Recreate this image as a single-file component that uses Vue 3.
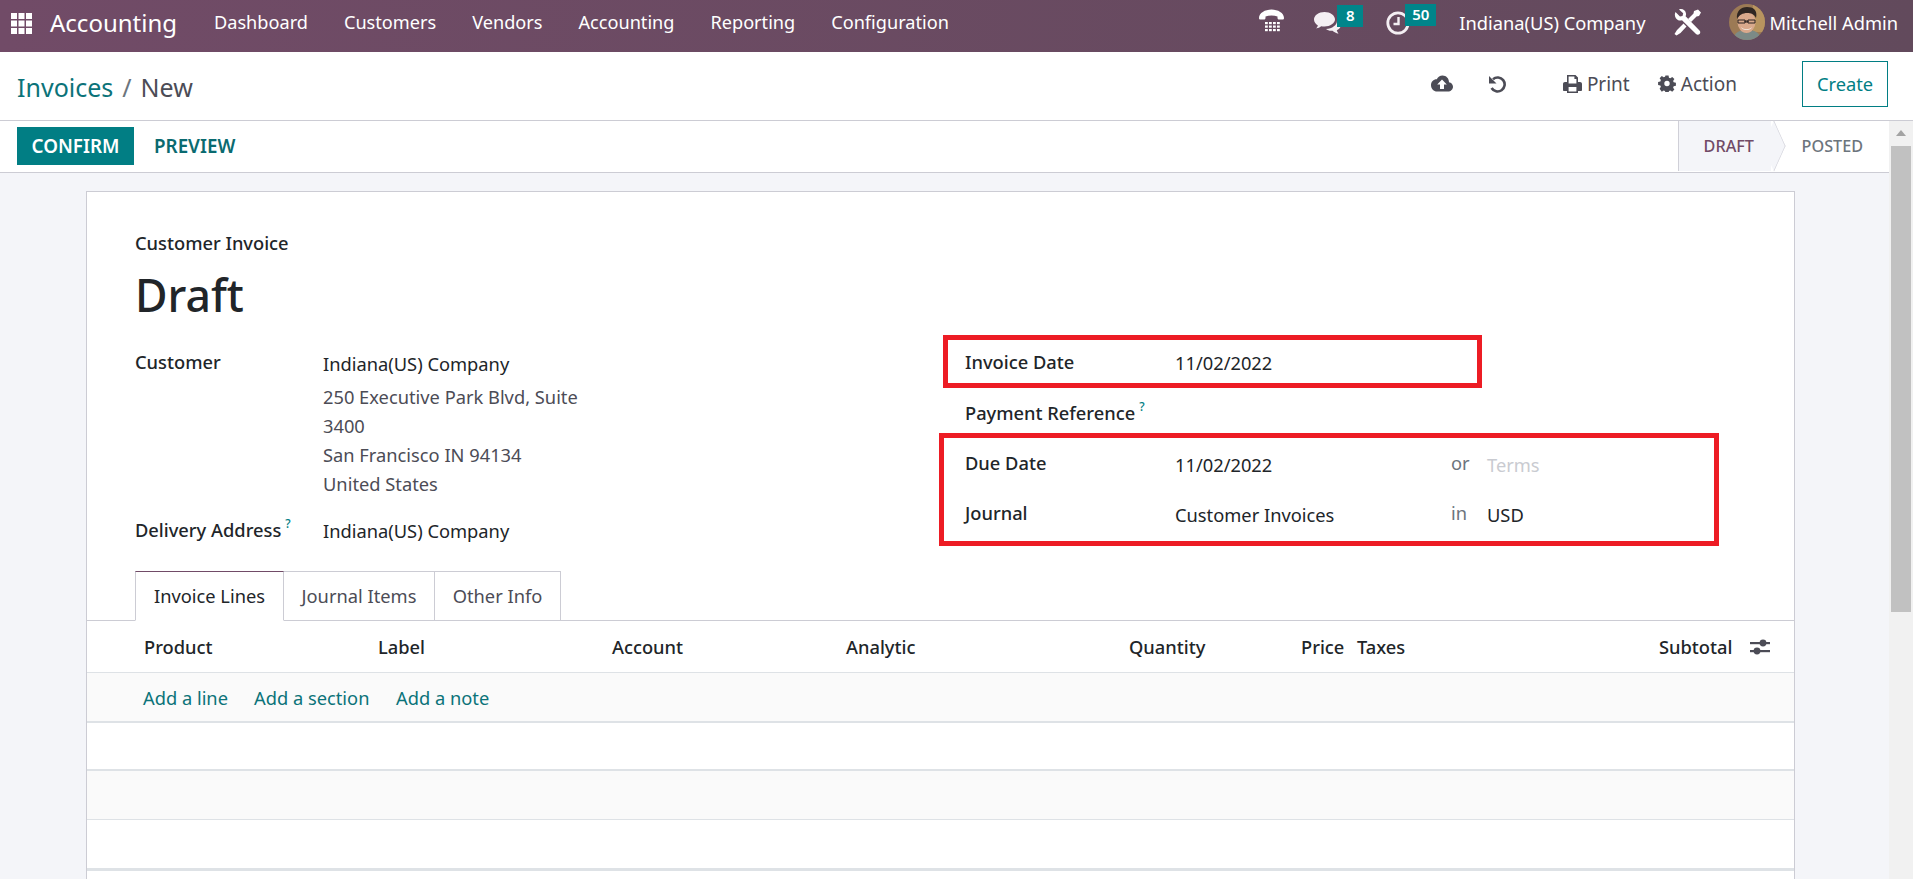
<template>
  <div class="app">
    <header class="navbar">
      <svg class="apps" viewBox="0 0 21 21" width="21" height="21" fill="#fff">
        <template v-for="y in [0, 7.5, 15]" :key="y">
          <rect v-for="x in [0, 7.5, 15]" :key="x" :x="x" :y="y" width="6" height="6" />
        </template>
      </svg>
      <span class="brand">Accounting</span>
      <nav class="menu">
        <a v-for="item in menu" :key="item">{{ item }}</a>
      </nav>
      <div class="systray">
        <svg class="tray-phone" viewBox="0 0 25 23" width="25" height="23" fill="#fff">
          <path d="M0 9c0-5 6-8.500 12.500-8.500S25 4 25 9c0 1-.6 1.500-1.500 1.500h-3.500c-1 0-1.500-.6-1.500-1.500V7.500c-3.500-1.200-8.500-1.200-12 0V9c0 .9-.5 1.500-1.500 1.500H1.500C.6 10.500 0 10 0 9z" />
          <template v-for="y in [13, 16.500, 20]" :key="y">
            <rect v-for="x in [6, 10, 14, 18]" :key="x" :x="x" :y="y" width="2.800" height="2.200" />
          </template>
        </svg>
        <span class="tray-item tray-chat">
          <svg viewBox="0 0 27 22" width="27" height="22" fill="#f4eff3">
            <path d="M10.500 0C4.700 0 0 3.400 0 7.600c0 2.400 1.500 4.500 3.900 5.900-.3 1-.9 2-1.700 2.900 1.900-.2 3.700-1 5-2.100 1.100.2 2.200.3 3.300.3 5.800 0 10.500-3.400 10.500-7C21 3.400 16.300 0 10.500 0z" />
            <path d="M23 8.500c.2 4.600-4.800 8.200-11 8.500 1.700 1.500 4 2 6.500 1.700 1.600 1.300 3.700 2.400 6 3-.8-1-1.400-2.200-1.700-3.500 2.500-1.100 4.200-3.100 4.200-5.300 0-1.900-1.500-3.500-4-4.400z" />
          </svg>
          <b class="badge">8</b>
        </span>
        <span class="tray-item tray-clock">
          <svg viewBox="0 0 24 24" width="24" height="24" fill="none" stroke="#f4eff3">
            <circle cx="12" cy="12" r="10.200" stroke-width="2.800" />
            <path d="M12.500 6v7H7.500" stroke-width="2.400" />
          </svg>
          <b class="badge">50</b>
        </span>
        <span class="company">Indiana(US) Company</span>
        <svg class="tools" viewBox="0 0 27 27" width="27" height="27" fill="#fff">
          <path d="M1.500 3 6 7.500l2.500-.6.700-2.600L5 .5C8-.7 11.500 1 12 4.500c.2 1-.1 2-.4 2.800L25.500 21.500c1 1 1 2.500 0 3.500s-2.500 1-3.500 0L8 11.300c-1 .3-2.200.4-3.200.1C1.500 10.500-.2 6.500 1.500 3z" />
          <path d="M24 .5 27 3.500l-2 3.500-2.500.5-5.500 5.500-3-3 5.500-5.500.5-2.500zM9.500 14.500l3 3-6 6.500-4 2.500-2-1.500 2.500-4z" />
        </svg>
        <svg class="avatar" viewBox="0 0 36 36" width="36" height="36">
          <defs>
            <clipPath id="avatar-clip"><circle cx="18" cy="18" r="18" /></clipPath>
          </defs>
          <g clip-path="url(#avatar-clip)">
            <rect width="36" height="36" fill="#9c7a55" />
            <rect x="24" width="12" height="28" fill="#b8945f" />
            <path d="M4 36c1-8 7-10 14-10s13 2 14 10z" fill="#7c8a86" />
            <ellipse cx="17.500" cy="18" rx="9" ry="11" fill="#d9a98c" />
            <path d="M8 15c-1-8 4-12 10-12s11 3 9 11c-2-4-5-5-9-5s-8 2-10 6z" fill="#2f2622" />
            <path d="M9 16h7v3H9zM19 16h7v3h-7zM16 17h3v1h-3z" fill="none" stroke="#2a2320" stroke-width="1" />
            <path d="M12 23c3 3 8 3 11 0-1 4-10 4-11 0z" fill="#f4efe9" />
          </g>
        </svg>
        <span class="username">Mitchell Admin</span>
      </div>
    </header>

    <div class="control-panel">
      <div class="breadcrumb">
        <a>Invoices</a><span class="slash">/</span><span class="current">New</span>
      </div>
      <div class="cp-actions">
        <svg class="icon-cloud" viewBox="0 0 22 17" width="22" height="17">
          <path fill="#4c4c56" d="M18 7.200C18 3.300 15 .5 11.600.5 9 .5 6.800 2 5.800 4.300 2.600 4.200 0 6.800 0 10.200 0 13.900 2.800 16.500 6 16.500h11c2.800 0 5-2.200 5-4.800 0-2.300-1.700-4.100-4-4.500z" />
          <path fill="#fff" d="M11 4.500 15.800 9.500H13v4.500H9V9.500H6.200z" />
        </svg>
        <svg class="icon-undo" viewBox="0 0 18 18" width="18" height="18" fill="none">
          <path d="M5 4.200A7 7 0 1 1 3.600 13" stroke="#4c4c56" stroke-width="2.600" />
          <path d="M1 1v7.500h7.500z" fill="#4c4c56" />
        </svg>
        <span class="cp-link cp-print">
          <svg viewBox="0 0 19 18" width="19" height="18">
            <path fill="#4c4c56" d="M4 0h8.500L15 2.500V7h2c1.200 0 2 .8 2 2v6c0 .5-.4 1-1 1h-3v2H4v-2H1c-.6 0-1-.5-1-1V9c0-1.200.8-2 2-2h2zM5.600 1.600V8.500h7.800V4h-2V1.600zM5.600 12v4.400h7.800V12z" fill-rule="evenodd" />
          </svg>
          Print
        </span>
        <span class="cp-link cp-action">
          <svg viewBox="-1 0 20 18" width="18" height="17">
            <path fill="#4c4c56" fill-rule="evenodd" d="M7.300 0h3.400l.5 2.500 1.500.6 2.100-1.400 2.400 2.400-1.400 2.100.6 1.500 2.500.5v3.400l-2.500.5-.6 1.500 1.400 2.100-2.400 2.400-2.100-1.400-1.500.6-.5 2.500H7.300l-.5-2.500-1.500-.6-2.100 1.400L.8 14.700l1.400-2.100-.6-1.500L-.9 10.600V7.200l2.500-.5.6-1.500L.8 3.100l2.400-2.400 2.100 1.400 1.500-.6zM9 6a3 3 0 1 0 0 6 3 3 0 0 0 0-6z" />
          </svg>
          Action
        </span>
        <button class="btn-create">Create</button>
      </div>
    </div>

    <div class="workspace">
      <div class="content">
        <div class="statusbar">
          <div class="buttons">
            <button class="btn-confirm">CONFIRM</button>
            <button class="btn-preview">PREVIEW</button>
          </div>
          <div class="stages">
            <span class="stage stage-active">DRAFT</span>
            <span class="stage">POSTED</span>
          </div>
        </div>

        <div class="sheet-wrap">
          <div class="sheet">
            <div class="sheet-top">
              <div class="doc-type">Customer Invoice</div>
              <h1 class="doc-title">Draft</h1>
              <div class="groups">
                <div class="group-left">
                  <div class="field-row">
                    <label>Customer</label>
                    <div class="address">
                      <div class="addr-name">Indiana(US) Company</div>
                      <div v-for="line in addressLines" :key="line" class="addr-line">{{ line }}</div>
                    </div>
                  </div>
                  <div class="field-row delivery">
                    <label>Delivery Address<sup>?</sup></label>
                    <div class="val">Indiana(US) Company</div>
                  </div>
                </div>
                <div class="group-right">
                  <div class="mark mark-date">
                    <label>Invoice Date</label>
                    <div class="val">11/02/2022</div>
                  </div>
                  <div class="pay-ref"><label>Payment Reference<sup>?</sup></label></div>
                  <div class="mark mark-due">
                    <div class="due-row">
                      <label>Due Date</label>
                      <div class="val">11/02/2022</div>
                      <span class="joiner">or</span>
                      <span class="placeholder">Terms</span>
                    </div>
                    <div class="due-row">
                      <label>Journal</label>
                      <div class="val">Customer Invoices</div>
                      <span class="joiner">in</span>
                      <span class="val">USD</span>
                    </div>
                  </div>
                </div>
              </div>
            </div>

            <div class="tabs">
              <a v-for="(tab, i) in tabs" :key="tab" class="tab" :class="{ active: i === 0 }">{{ tab }}</a>
            </div>

            <div class="lines-head">
              <span v-for="col in columns" :key="col">{{ col }}</span>
              <svg class="sliders" viewBox="0 0 20 18" width="20" height="18" fill="#4c4c56">
                <rect y="4" width="20" height="2.200" />
                <circle cx="13" cy="5" r="3.400" />
                <rect y="12" width="20" height="2.200" />
                <circle cx="7" cy="13" r="3.400" />
              </svg>
            </div>
            <div class="line-row add-row">
              <a>Add a line</a><a>Add a section</a><a>Add a note</a>
            </div>
            <div class="line-row empty"></div>
            <div class="line-row empty alt"></div>
            <div class="line-row empty last"></div>
          </div>
        </div>
      </div>

      <div class="scrollbar">
        <div class="scroll-btn"></div>
        <div class="scroll-thumb"></div>
      </div>
    </div>
  </div>
</template>

<script setup>
const menu = ['Dashboard', 'Customers', 'Vendors', 'Accounting', 'Reporting', 'Configuration']
const addressLines = ['250 Executive Park Blvd, Suite', '3400', 'San Francisco IN 94134', 'United States']
const tabs = ['Invoice Lines', 'Journal Items', 'Other Info']
const columns = ['Product', 'Label', 'Account', 'Analytic', 'Quantity', 'Price', 'Taxes', 'Subtotal']
</script>

<style>
html,
body {
  margin: 0;
  background: #f4f5f9;
}
</style>

<style scoped>
.app {
  width: 1913px;
  height: 879px;
  overflow: hidden;
  font-family: "Noto Sans", "Open Sans", sans-serif;
  font-size: 18.3px;
  color: #4c4c56;
  display: flex;
  flex-direction: column;
}

.navbar {
  height: 52px;
  flex: none;
  box-sizing: border-box;
  padding-bottom: 8px;
  display: flex;
  align-items: center;
  color: #fff;
  background: linear-gradient(90deg, #714b67, #624a5c);
}

.apps {
  margin: 3px 0 0 11px;
}

.brand {
  margin-left: 18px;
  font-size: 24px;
  width: 164px;
}

.menu {
  display: flex;
  font-size: 18.15px;
}

.menu a {
  margin-right: 36px;
}

.systray {
  margin-left: auto;
  display: flex;
  align-items: center;
  height: 100%;
}

.tray-phone {
  margin-bottom: 3px;
  margin-right: 30px;
}

.tray-item {
  position: relative;
  display: flex;
  margin-top: 1px;
}

.tray-chat {
  width: 72px;
}

.tray-clock {
  width: 73px;
}

.badge {
  position: absolute;
  top: -7px;
  height: 22px;
  line-height: 20px;
  text-align: center;
  background: #00858a;
  color: #fff;
  font-size: 15px;
  font-weight: 600;
}

.tray-chat .badge {
  left: 23px;
  width: 26px;
}

.tray-clock .badge {
  left: 19px;
  width: 31px;
}

.tools {
  margin-left: 28px;
}

.avatar {
  margin-left: 28px;
}

.username {
  margin-left: 5px;
  margin-right: 15px;
}

.control-panel {
  height: 69px;
  flex: none;
  box-sizing: border-box;
  background: #fff;
  border-bottom: 1px solid #ccccd4;
  padding-bottom: 5px;
  display: flex;
  align-items: center;
  justify-content: space-between;
}

.breadcrumb {
  margin: 7px 0 0 17px;
  font-size: 25px;
  display: flex;
}

.breadcrumb a {
  color: #0b7379;
}

.slash {
  margin: 0 9px;
  color: #6c757d;
}

.current {
  color: #4c4c56;
}

.cp-actions {
  display: flex;
  align-items: center;
  margin-right: 25px;
}

.icon-undo {
  margin-left: 35px;
}

.cp-link {
  display: flex;
  align-items: center;
  gap: 5px;
  font-size: 19px;
}

.cp-print {
  margin-left: 57px;
}

.cp-action {
  margin-left: 28px;
}

.btn-create {
  margin-left: 65px;
  width: 86px;
  height: 46px;
  background: #fff;
  border: 1px solid #017e84;
  color: #017e84;
  font: inherit;
  padding: 0;
}

.workspace {
  flex: 1;
  min-height: 0;
  display: flex;
}

.content {
  flex: 1;
  min-width: 0;
  display: flex;
  flex-direction: column;
}

.statusbar {
  height: 52px;
  flex: none;
  box-sizing: border-box;
  background: #fff;
  border-bottom: 1px solid #ccccd4;
  display: flex;
  justify-content: space-between;
}

.buttons {
  margin: 6px 0 0 17px;
  display: flex;
  align-items: flex-start;
}

.buttons button {
  height: 38px;
  border: 0;
  padding: 0;
  font-family: inherit;
  font-size: 18.8px;
  font-weight: 600;
}

.btn-confirm {
  width: 117px;
  background: #017e84;
  color: #fff;
}

.btn-preview {
  margin-left: 20px;
  background: none;
  color: #0a6a70;
}

.stages {
  display: flex;
  height: 50px;
  font-size: 16.2px;
  font-weight: 500;
}

.stage {
  line-height: 50px;
  color: #6c757d;
  padding: 0 26px 0 19px;
}

.stage-active {
  position: relative;
  width: 93px;
  box-sizing: border-box;
  padding: 0 0 0 25px;
  margin-right: 12px;
  background: #f4f5f9;
  border-left: 1px solid #d0d0d8;
  color: #714b67;
  z-index: 1;
}

.stage-active::after {
  content: "";
  position: absolute;
  left: 77px;
  top: 7px;
  width: 35px;
  height: 35px;
  background: #f4f5f9;
  border-top: 1px solid #d0d0d8;
  border-right: 1px solid #d0d0d8;
  transform: scaleX(0.45) rotate(45deg);
  z-index: -1;
}

.sheet-wrap {
  flex: 1;
  min-height: 0;
  padding: 18px 0 0 86px;
  background: #f4f5f9;
}

.sheet {
  width: 1709px;
  height: 100%;
  box-sizing: border-box;
  background: #fff;
  border: 1px solid #ccccd4;
  border-bottom: 0;
}

.sheet-top {
  padding: 38px 0 0 48px;
  height: 379px;
  box-sizing: border-box;
}

.doc-type {
  height: 26px;
  line-height: 26px;
  color: #212529;
  font-weight: 500;
}

.doc-title {
  margin: 3px 0 1px;
  height: 72px;
  line-height: 72px;
  font-size: 44.5px;
  font-weight: 500;
  color: #212529;
}

.groups {
  display: flex;
  padding-top: 3px;
}

.group-left {
  width: 804px;
  padding-top: 13px;
  flex: none;
}

label {
  font-weight: 500;
  color: #212529;
}

sup {
  font-size: 12px;
  color: #017e84;
  margin-left: 4px;
  line-height: 0;
  vertical-align: 9px;
  font-weight: 500;
}

.field-row {
  display: grid;
  grid-template-columns: 188px 1fr;
}

.field-row label {
  line-height: 28px;
}

.address {
  line-height: 29px;
}

.addr-name {
  color: #212529;
  line-height: 32px;
  margin-bottom: 2px;
}

.addr-line {
  color: #4c4c56;
}

.delivery {
  margin-top: 18px;
}

.delivery .val {
  line-height: 29px;
}

.val {
  color: #212529;
}

.group-right {
  display: flex;
  flex-direction: column;
}

.mark {
  box-sizing: border-box;
  border: 5px solid #ed1c24;
}

.mark-date {
  margin-left: 4px;
  width: 539px;
  height: 53px;
  display: grid;
  grid-template-columns: 210px 1fr;
  padding-left: 17px;
  align-items: center;
}

.mark-date .val {
  padding-top: 2px;
}

.pay-ref {
  height: 45px;
  padding: 11px 0 0 26px;
  box-sizing: border-box;
  line-height: 28px;
}

.mark-due {
  width: 780px;
  height: 113px;
  padding: 11px 0 0 21px;
}

.due-row {
  display: grid;
  grid-template-columns: 210px 276px 36px 1fr;
  height: 50px;
  line-height: 28px;
}

.due-row .val,
.placeholder {
  padding-top: 2px;
}

.joiner {
  color: #6c757d;
}

.placeholder {
  color: #c9cbd1;
}

.tabs {
  display: flex;
  height: 50px;
  box-sizing: border-box;
  padding-left: 48px;
  border-bottom: 1px solid #ccccd4;
}

.tab {
  box-sizing: border-box;
  height: 50px;
  line-height: 48px;
  text-align: center;
  background: #fff;
  border: 1px solid #ccccd4;
  border-left: 0;
  color: #4c4c56;
}

.tab:nth-child(1) {
  width: 149px;
}

.tab:nth-child(2) {
  width: 151px;
}

.tab:nth-child(3) {
  width: 126px;
}

.tab.active {
  border-left: 1px solid #ccccd4;
  border-top: 1px solid #714b67;
  border-bottom-color: #fff;
  color: #212529;
}

.lines-head {
  display: grid;
  grid-template-columns: 234px 234px 234px 283px 172px 56px 302px 91px 20px;
  padding-left: 57px;
  height: 52px;
  box-sizing: border-box;
  align-items: center;
  border-bottom: 1px solid #dee2e6;
  color: #212529;
  font-weight: 500;
}

.line-row {
  box-sizing: border-box;
}

.add-row {
  height: 50px;
  background: #fafafa;
  border-bottom: 2px solid #dee2e6;
  display: flex;
  align-items: center;
  padding-left: 56px;
  color: #0b7379;
}

.add-row a:nth-child(1) {
  width: 111px;
}

.add-row a:nth-child(2) {
  width: 142px;
}

.empty {
  height: 48px;
  border-bottom: 2px solid #dee2e6;
}

.empty.alt {
  height: 49px;
  background: #fafafa;
  border-bottom-width: 1px;
}

.empty.last {
  height: 51px;
  border-bottom-width: 3px;
}

.scrollbar {
  width: 24px;
  flex: none;
  background: #f1f1f1;
  display: flex;
  flex-direction: column;
  align-items: center;
}

.scroll-btn {
  height: 25px;
  width: 100%;
  position: relative;
}

.scroll-btn::after {
  content: "";
  position: absolute;
  left: 7px;
  top: 9px;
  border-left: 5px solid transparent;
  border-right: 5px solid transparent;
  border-bottom: 6px solid #a3a3a3;
}

.scroll-thumb {
  width: 20px;
  height: 466px;
  background: #c1c1c1;
}
</style>
